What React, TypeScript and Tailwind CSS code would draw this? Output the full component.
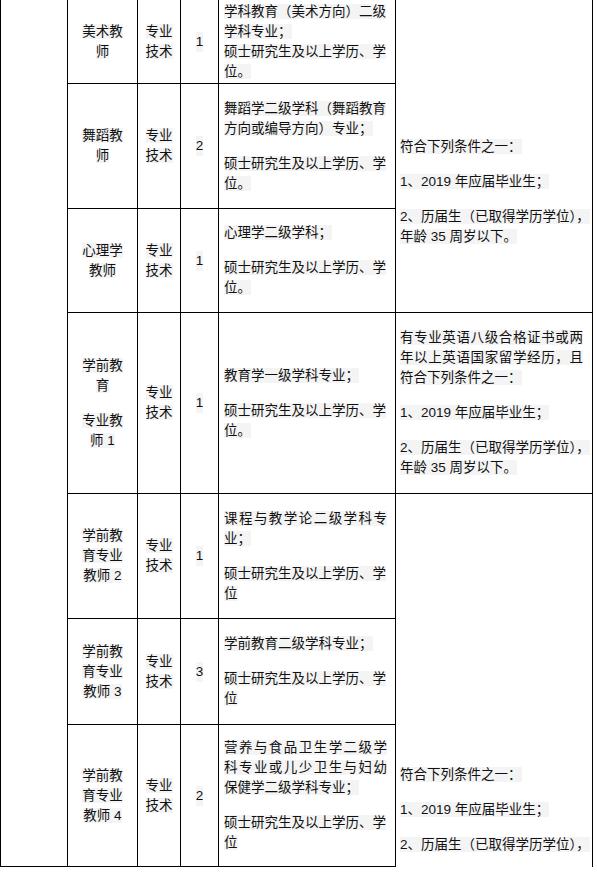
const spread = new Set([
  "课程与教学论二级学科专",
  "营养与食品卫生学二级学",
  "科专业或儿少卫生与妇幼",
  "有专业英语八级合格证书或两",
  "年以上英语国家留学经历，且",
]);

const rows = [
  {
    title: [["美术教", "师"]],
    count: "1",
    major: [["学科教育（美术方向）二级", "学科专业；", "硕士研究生及以上学历、学", "位。"]],
  },
  {
    title: [["舞蹈教", "师"]],
    count: "2",
    major: [
      ["舞蹈学二级学科（舞蹈教育", "方向或编导方向）专业；"],
      ["硕士研究生及以上学历、学", "位。"],
    ],
  },
  {
    title: [["心理学", "教师"]],
    count: "1",
    major: [["心理学二级学科；"], ["硕士研究生及以上学历、学", "位。"]],
  },
  {
    title: [["学前教", "育"], ["专业教", "师 1"]],
    count: "1",
    major: [["教育学一级学科专业；"], ["硕士研究生及以上学历、学", "位。"]],
  },
  {
    title: [["学前教", "育专业", "教师 2"]],
    count: "1",
    major: [["课程与教学论二级学科专", "业；"], ["硕士研究生及以上学历、学", "位"]],
  },
  {
    title: [["学前教", "育专业", "教师 3"]],
    count: "3",
    major: [["学前教育二级学科专业；"], ["硕士研究生及以上学历、学", "位"]],
  },
  {
    title: [["学前教", "育专业", "教师 4"]],
    count: "2",
    major: [
      ["营养与食品卫生学二级学", "科专业或儿少卫生与妇幼", "保健学二级学科专业；"],
      ["硕士研究生及以上学历、学", "位"],
    ],
  },
];

const basic = [
  ["符合下列条件之一："],
  ["1、2019 年应届毕业生；"],
  ["2、历届生（已取得学历学位），", "年龄 35 周岁以下。"],
];

// last cell is cut off by the bottom edge of the shot
const basicCut = [
  ["符合下列条件之一："],
  ["1、2019 年应届毕业生；"],
  ["2、历届生（已取得学历学位），"],
];

const english = [
  ["有专业英语八级合格证书或两", "年以上英语国家留学经历，且", "符合下列条件之一："],
  ["1、2019 年应届毕业生；"],
  ["2、历届生（已取得学历学位），", "年龄 35 周岁以下。"],
];

const rowStart = [
  "row-start-1",
  "row-start-2",
  "row-start-3",
  "row-start-4",
  "row-start-5",
  "row-start-6",
  "row-start-7",
];

function Block({
  paras,
  width,
  center = false,
}: {
  paras: string[][];
  width?: string;
  center?: boolean;
}) {
  return (
    <div className={`flex flex-col gap-[15px] ${center ? "items-center" : ""}`}>
      {paras.map((lines, i) => (
        <div key={i} className={`flex flex-col ${center ? "items-center" : ""}`}>
          {lines.map((line) => (
            <div
              key={line}
              className={`whitespace-nowrap ${
                spread.has(line) ? `${width} [text-align-last:justify]` : ""
              }`}
            >
              <span className="bg-[#f4f4f4]">{line}</span>
            </div>
          ))}
        </div>
      ))}
    </div>
  );
}

export default function App() {
  return (
    <div className="h-[873px] w-[597px] overflow-hidden bg-white font-['Liberation_Sans','Noto_Sans_CJK_SC',sans-serif] text-[13.5px] leading-[20px] text-[#111]">
      <div className="-mt-px grid grid-cols-[67px_70px_43px_38px_177px_198px] grid-rows-[84px_125px_104px_181px_125px_106px_143px]">
        <div className="col-start-1 row-start-1 row-span-7 border-t border-b border-l border-black" />

        {rows.map((row, i) => {
          const last = i === rows.length - 1 ? "border-b" : "";
          return [
            <div
              key={`t${i}`}
              className={`col-start-2 ${rowStart[i]} flex items-center justify-center border-l border-t border-black ${last}`}
            >
              <Block paras={row.title} center />
            </div>,
            <div
              key={`k${i}`}
              className={`col-start-3 ${rowStart[i]} flex items-center justify-center border-l border-t border-black ${last}`}
            >
              <Block paras={[["专业", "技术"]]} center />
            </div>,
            <div
              key={`n${i}`}
              className={`col-start-4 ${rowStart[i]} flex items-center justify-center border-l border-t border-black ${last}`}
            >
              <span className="bg-[#f4f4f4]">{row.count}</span>
            </div>,
            <div
              key={`m${i}`}
              className={`col-start-5 ${rowStart[i]} flex items-center border-l border-t border-black pl-[5px] ${last}`}
            >
              <Block paras={row.major} width="w-[163px]" />
            </div>,
          ];
        })}

        <div className="col-start-6 row-start-1 row-span-3 border-x border-t border-black pl-[4px] pt-[137px]">
          <Block paras={basic} width="w-[183px]" />
        </div>
        <div className="col-start-6 row-start-4 flex items-center border-x border-t border-black pl-[4px]">
          <Block paras={english} width="w-[183px]" />
        </div>
        <div className="col-start-6 row-start-5 row-span-3 overflow-hidden border-x border-t border-black pl-[4px] pt-[271px]">
          <Block paras={basicCut} width="w-[183px]" />
        </div>
      </div>
    </div>
  );
}
